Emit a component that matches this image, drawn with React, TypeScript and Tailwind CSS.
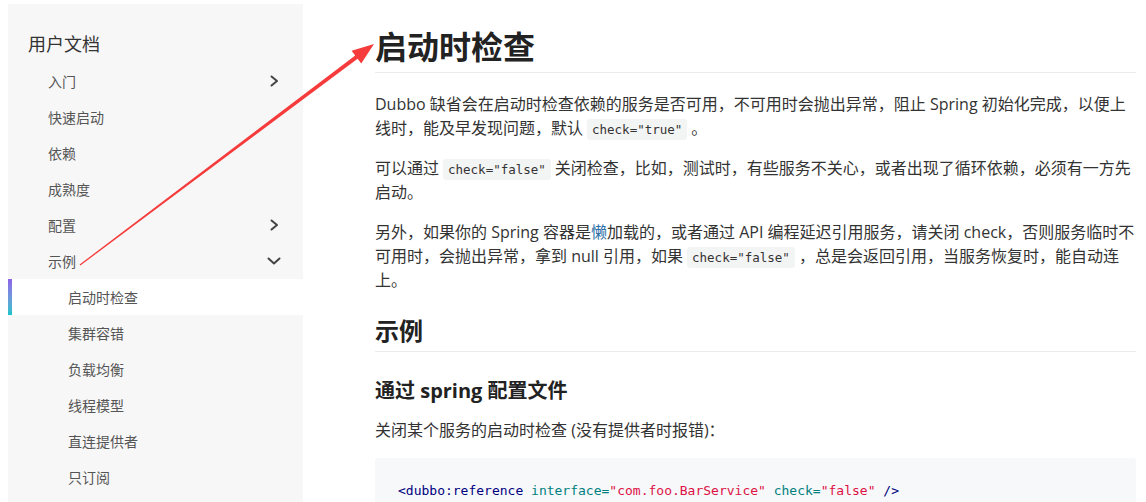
import { ReactNode } from 'react';

const sans = '[font-family:"Open_Sans","Noto_Sans_CJK_SC",sans-serif]';

function Chevron({ down }: { down?: boolean }) {
  if (down) {
    return (
      <svg width="14" height="8" viewBox="0 0 14 8" className="text-[#444]">
        <polyline points="1.5,1.5 7,6.5 12.5,1.5" fill="none" stroke="currentColor" strokeWidth="2" strokeLinecap="round" strokeLinejoin="round" />
      </svg>
    );
  }
  return (
    <svg width="9" height="12" viewBox="0 0 9 12" className="text-[#444]">
      <polyline points="1.5,1.5 7,6 1.5,10.5" fill="none" stroke="currentColor" strokeWidth="2" strokeLinecap="round" strokeLinejoin="round" />
    </svg>
  );
}

function NavItem({ label, depth = 1, icon, active }: { label: string; depth?: 1 | 2; icon?: 'right' | 'down'; active?: boolean }) {
  return (
    <div
      className={`relative flex h-9 items-center justify-between pr-[21px] text-[14px] text-[#555] ${
        depth === 1 ? 'pl-10' : 'pl-[60px]'
      } ${active ? 'bg-white' : ''}`}
    >
      {active && <div className="absolute inset-y-0 left-0 w-1 bg-gradient-to-b from-[#8b63e8] to-[#0ac4cc]" />}
      <span>{label}</span>
      {icon && (
        <span className="flex w-4 justify-center">
          <Chevron down={icon === 'down'} />
        </span>
      )}
    </div>
  );
}

function Code({ children }: { children: ReactNode }) {
  return (
    <code className="mx-1 rounded-[3px] bg-[#f3f4f4] px-[5px] py-[3px] [font-family:'DejaVu_Sans_Mono',monospace] text-[12.5px] leading-none text-[#333]">
      {children}
    </code>
  );
}

function Arrow() {
  // annotation drawn over the page, from the "示例" entry to the page title
  const sx = 80, sy = 265, tx = 374, ty = 44;
  const dx = tx - sx, dy = ty - sy;
  const len = Math.hypot(dx, dy);
  const ux = dx / len, uy = dy / len;
  const nx = -uy, ny = ux;
  const bx = tx - 22 * ux, by = ty - 22 * uy;
  const pts = [
    [sx + 0.6 * nx, sy + 0.6 * ny],
    [bx + 2 * nx, by + 2 * ny],
    [bx + 8 * nx, by + 8 * ny],
    [tx, ty],
    [bx - 8 * nx, by - 8 * ny],
    [bx - 2 * nx, by - 2 * ny],
    [sx - 0.6 * nx, sy - 0.6 * ny],
  ]
    .map((p) => p.join(','))
    .join(' ');
  return (
    <svg className="pointer-events-none absolute inset-0" width="1146" height="502">
      <polygon points={pts} fill="#f53b3b" />
    </svg>
  );
}

export default function App() {
  return (
    <div className={`relative h-[502px] w-[1146px] overflow-hidden bg-white ${sans}`}>
      <div className="flex h-full">
        {/* sidebar */}
        <aside className="ml-2 mt-1 w-[295px] shrink-0 bg-[#f7f7f7] pt-[26px]">
          <div className="mb-[5px] pl-5 text-[18px] leading-7 text-[#333]">用户文档</div>
          <NavItem label="入门" icon="right" />
          <NavItem label="快速启动" />
          <NavItem label="依赖" />
          <NavItem label="成熟度" />
          <NavItem label="配置" icon="right" />
          <NavItem label="示例" icon="down" />
          <NavItem label="启动时检查" depth={2} active />
          <NavItem label="集群容错" depth={2} />
          <NavItem label="负载均衡" depth={2} />
          <NavItem label="线程模型" depth={2} />
          <NavItem label="直连提供者" depth={2} />
          <NavItem label="只订阅" depth={2} />
        </aside>

        {/* article */}
        <main className="ml-[72px] w-[761px] shrink-0 pt-[27px] text-[16px] text-[#333]">
          <h1 className="mb-[19px] border-b border-[#eaecef] pb-[5px] text-[32px] font-bold leading-10 text-[#222]">
            启动时检查
          </h1>
          <p className="mb-4 whitespace-nowrap leading-6">
            Dubbo 缺省会在启动时检查依赖的服务是否可用，不可用时会抛出异常，阻止 Spring 初始化完成，以便上
            <br />
            线时，能及早发现问题，默认<Code>check="true"</Code>。
          </p>
          <p className="mb-4 whitespace-nowrap leading-6">
            可以通过<Code>check="false"</Code>关闭检查，比如，测试时，有些服务不关心，或者出现了循环依赖，必须有一方先
            <br />
            启动。
          </p>
          <p className="mb-[23px] whitespace-nowrap leading-6">
            另外，如果你的 Spring 容器是<span className="text-[#2c6fa8]">懒</span>加载的，或者通过 API 编程延迟引用服务，请关闭 check，否则服务临时不
            <br />
            可用时，会抛出异常，拿到 null 引用，如果<Code>check="false"</Code>，总是会返回引用，当服务恢复时，能自动连
            <br />
            上。
          </p>
          <h2 className="mb-[25px] border-b border-[#eaecef] pb-1 text-[24px] font-bold leading-8 text-[#222]">示例</h2>
          <h3 className="mb-[13px] text-[20px] font-bold leading-7 text-[#222]">通过 spring 配置文件</h3>
          <p className="mb-4 leading-6">关闭某个服务的启动时检查 (没有提供者时报错)：</p>
          <pre className="rounded-[3px] bg-[#f6f8fa] px-[23px] pb-4 pt-[23px] [font-family:'DejaVu_Sans_Mono',monospace] text-[13px] leading-5">
            <span className="text-[#000080]">&lt;dubbo:reference</span>{' '}
            <span className="text-[#008080]">interface=</span>
            <span className="text-[#dd1144]">"com.foo.BarService"</span>{' '}
            <span className="text-[#008080]">check=</span>
            <span className="text-[#dd1144]">"false"</span>{' '}
            <span className="text-[#000080]">/&gt;</span>
          </pre>
        </main>
      </div>
      <Arrow />
    </div>
  );
}
